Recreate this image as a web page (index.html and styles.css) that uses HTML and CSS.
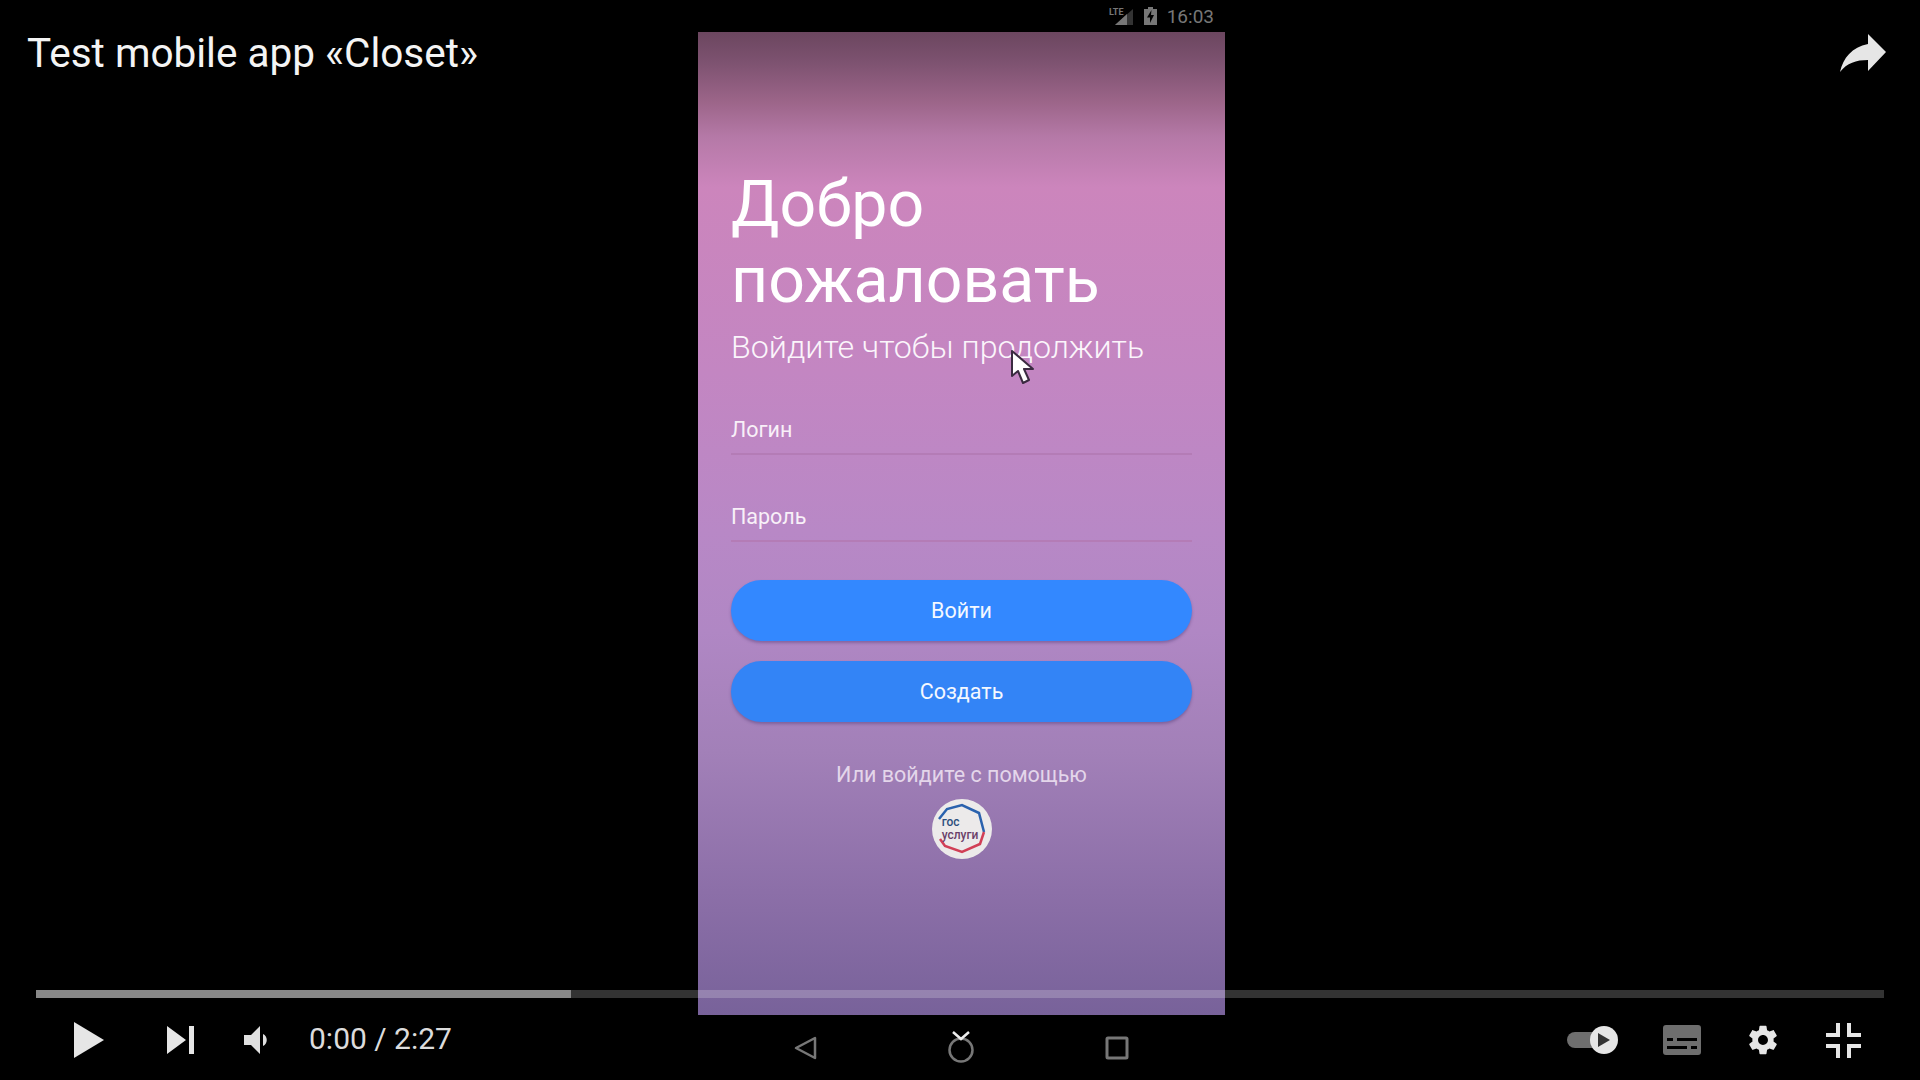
FILE: index.html
```html
<!DOCTYPE html>
<html lang="ru">
  <head>
    <meta charset="UTF-8" />
    <title>Test mobile app «Closet»</title>
    <link rel="stylesheet" href="styles.css">
  </head>
  <body>
    <div class="player">
      <div class="phone">
        <div class="status-bar">
          <svg class="signal" width="24" height="18" viewBox="0 0 24 18">
            <path d="M24 2V18H6z" fill="#333" />
            <path d="M18 7V18H6z" fill="#777" />
            <text x="0" y="8" class="lte">LTE</text>
          </svg>
          <svg class="battery" width="13" height="18" viewBox="0 0 13 18">
            <path d="M4 0h5v2h4v16H0V2h4z" fill="#777" />
            <path d="M7.500 3 3 10.500h3V16l4-8H7z" fill="#000" />
          </svg>
          <span class="clock">16:03</span>
        </div>

        <div class="screen">
          <h1>Добро<br />пожаловать</h1>
          <p class="subtitle">Войдите чтобы продолжить</p>
          <div class="field">Логин</div>
          <div class="field">Пароль</div>
          <button class="btn btn-first">Войти</button>
          <button class="btn btn-second">Создать</button>
          <p class="alt-login">Или войдите с помощью</p>
          <div class="gos-logo">
            <svg width="60" height="60" viewBox="0 0 60 60" class="gos-hex">
              <path d="M7 20 15 10 30 6 47 14 52 33" fill="none" stroke="#2a62ae" stroke-width="2.500" />
              <path d="M52 33 48 45 30 53 13 47 8 40" fill="none" stroke="#d13f56" stroke-width="2.500" />
            </svg>
            <span class="gos-text">гос<br /><span class="gos-text-red">услуги</span></span>
          </div>
        </div>

        <div class="nav-bar">
          <svg width="24" height="26" viewBox="0 0 24 26">
            <path d="M22 3V23L3 13z" fill="none" stroke="#777" stroke-width="2.500" stroke-linejoin="round" />
          </svg>
          <svg width="28" height="34" viewBox="0 0 28 34" class="home">
            <circle cx="14" cy="20" r="11.500" fill="none" stroke="#777" stroke-width="2.500" />
            <path d="M6 2l8 7 8-7" fill="none" stroke="#eee" stroke-width="2.500" />
          </svg>
          <svg width="24" height="24" viewBox="0 0 24 24" class="recent">
            <rect x="2" y="2" width="20" height="20" rx="1" fill="none" stroke="#777" stroke-width="3" />
          </svg>
        </div>
      </div>

      <svg class="cursor" width="26" height="36" viewBox="0 0 26 36">
        <path d="M2 1V26L8 21 13 33 19 30 14 19H23z" fill="#fff" stroke="#3a2a40" stroke-width="2" stroke-linejoin="round" />
      </svg>

      <div class="title-bar">
        <span class="video-title">Test mobile app «Closet»</span>
        <svg class="share" width="46" height="38" viewBox="0 0 46 38">
          <path d="M28 0 46 18 28 37V26C16 26 7 29 0 38 3 24 12 13 28 10z" fill="#e6e6e6" />
        </svg>
      </div>

      <div class="controls">
        <div class="progress"><div class="played" style="width: 535px"></div></div>
        <div class="buttons">
          <svg class="ic-play" width="30" height="36" viewBox="0 0 30 36"><path d="M0 0 30 18 0 36z" fill="#e6e6e6" /></svg>
          <svg class="ic-next" width="27" height="28" viewBox="0 0 27 28"><path d="M0 0 19 14 0 28zM22 0h5v28h-5z" fill="#e6e6e6" /></svg>
          <svg class="ic-volume" width="24" height="28" viewBox="0 0 24 28"><path d="M0 9H7L16 0V28L7 19H0zM19 8C24 10 24 18 19 20z" fill="#e0e0e0" /></svg>
          <span class="time">0:00 / 2:27</span>
          <span class="spacer"></span>
          <div class="autoplay">
            <span class="autoplay-track"></span>
            <span class="autoplay-knob">
              <svg width="14" height="16" viewBox="0 0 14 16"><path d="M1 1 13 8 1 15z" fill="#333" /></svg>
            </span>
          </div>
          <svg class="ic-captions" width="38" height="30" viewBox="0 0 38 30">
            <path fill-rule="evenodd" d="M3 0H35a3 3 0 0 1 3 3V27a3 3 0 0 1-3 3H3a3 3 0 0 1-3-3V3a3 3 0 0 1 3-3zM4 13v3H10V13zM14 13v3H34V13zM4 21v3H24V21zM28 21v3H34V21z" fill="#6e6e6e" />
          </svg>
          <svg class="ic-gear" width="34" height="34" viewBox="0 0 24 24">
            <path fill-rule="evenodd" d="M19.430 12.980c.04-.32.07-.64.07-.98s-.03-.66-.07-.98l2.110-1.650c.19-.15.24-.42.12-.64l-2-3.460c-.12-.22-.39-.3-.61-.22l-2.490 1c-.52-.4-1.080-.73-1.690-.98l-.38-2.650C14.460 2.180 14.250 2 14 2h-4c-.25 0-.46.180-.49.420l-.38 2.650c-.61.25-1.170.59-1.690.98l-2.490-1c-.23-.09-.49 0-.61.220l-2 3.460c-.13.220-.07.490.12.640l2.110 1.650c-.04.32-.07.650-.07.980s.03.660.07.980l-2.110 1.650c-.19.150-.24.420-.12.640l2 3.460c.12.220.39.300.61.220l2.490-1c.52.400 1.080.730 1.690.980l.38 2.650c.03.240.24.420.49.420h4c.25 0 .46-.180.49-.420l.38-2.650c.61-.250 1.170-.590 1.690-.980l2.490 1c.23.090.49 0 .61-.220l2-3.460c.12-.220.07-.490-.12-.640l-2.110-1.650zM12 15.500c-1.930 0-3.500-1.570-3.500-3.500s1.570-3.500 3.500-3.500 3.500 1.570 3.500 3.500-1.570 3.500-3.500 3.500z" fill="#e6e6e6" />
          </svg>
          <svg class="ic-fullscreen" width="35" height="35" viewBox="0 0 35 35">
            <path d="M10 0h4V14H0V10H10zM21 0h4V10h10v4H21zM0 21H14V35H10V25H0zM21 21H35v4H25v10H21z" fill="#e6e6e6" />
          </svg>
        </div>
      </div>
    </div>
  </body>
</html>
```

FILE: styles.css
```css
* {
  box-sizing: border-box;
}
body {
  margin: 0;
  background: #000;
  font-family: Roboto, sans-serif;
}
.player {
  position: relative;
  width: 1920px;
  height: 1080px;
  overflow: hidden;
  background: #000;
}

/* phone recording in the middle */
.phone {
  width: 527px;
  height: 1080px;
  margin-left: 698px;
  display: flex;
  flex-direction: column;
}
.status-bar {
  height: 32px;
  display: flex;
  align-items: center;
  justify-content: flex-end;
  padding-right: 11px;
}
.signal {
  margin-right: 11px;
}
.lte {
  font-size: 9px;
  font-weight: 700;
  fill: #777;
}
.battery {
  margin-right: 10px;
}
.clock {
  font-size: 19px;
  color: #777;
}
.screen {
  height: 983px;
  padding: 134px 33px 0 33px;
  color: #fff;
  background: linear-gradient(
    180deg,
    #6b465f 0,
    #7d5270 30px,
    #9c6589 70px,
    #b579a7 105px,
    #cc85bc 155px,
    #c386c2 340px,
    #b888c6 500px,
    #b087c4 600px,
    #a280b8 720px,
    #8c6fa8 860px,
    #78629a 983px
  );
}
h1 {
  margin: 0;
  font-size: 64.4px;
  font-weight: 400;
  line-height: 76px;
}
.subtitle {
  margin: 7px 0 0;
  font-size: 32.2px;
  font-weight: 300;
  line-height: 44px;
  color: #fbf5fb;
}
.field {
  height: 47px;
  margin-top: 39px;
  padding-top: 7px;
  font-size: 21.5px;
  line-height: 30px;
  border-bottom: 2px solid #b47cb6;
  color: #f8f0f8;
}
.field + .field {
  margin-top: 40px;
}
.btn {
  display: block;
  width: 100%;
  height: 61px;
  margin-top: 20px;
  border: none;
  border-radius: 31px;
  background: #3388ff;
  color: #f4f8ff;
  font-family: Roboto, sans-serif;
  font-size: 21.5px;
  box-shadow: 0 2px 3px rgba(70, 50, 110, 0.4);
}
.btn-first {
  margin-top: 38px;
}
.btn-second {
  background: #3384f6;
}
.alt-login {
  margin: 41px 0 0;
  text-align: center;
  font-size: 21.5px;
  line-height: 24px;
  color: #e4d6ea;
}
.gos-logo {
  position: relative;
  width: 60px;
  height: 60px;
  margin: 12px auto 0;
  border-radius: 50%;
  background: #eceaea;
  display: flex;
  align-items: center;
  justify-content: center;
}
.gos-hex {
  position: absolute;
  left: 0;
  top: 0;
}
.gos-text {
  position: relative;
  margin-right: 3px;
  font-size: 12px;
  font-weight: 500;
  line-height: 13px;
  color: #2c4f7d;
}
.gos-text-red {
  color: #6a3f68;
}
.nav-bar {
  flex: 1;
  display: flex;
  align-items: flex-start;
  padding: 20px 0 0 95px;
  gap: 130px;
}
.nav-bar .home {
  margin-top: -5px;
}
.nav-bar .recent {
  margin-top: 1px;
}

.cursor {
  position: absolute;
  left: 1010px;
  top: 350px;
}

/* overlays of the video player */
.title-bar {
  position: absolute;
  top: 31px;
  left: 27px;
  right: 34px;
  display: flex;
  justify-content: space-between;
  align-items: center;
}
.video-title {
  font-size: 40.5px;
  line-height: 44px;
  color: #f4f4f4;
}
.controls {
  position: absolute;
  left: 36px;
  right: 36px;
  top: 990px;
}
.progress {
  height: 8px;
  background: rgba(255, 255, 255, 0.2);
}
.played {
  height: 8px;
  background: #888;
}
.buttons {
  display: flex;
  align-items: center;
  height: 36px;
  margin-top: 24px;
  padding-left: 38px;
}
.ic-next {
  margin-left: 63px;
}
.ic-volume {
  margin-left: 50px;
}
.time {
  margin-left: 41px;
  padding-bottom: 4px;
  font-size: 30px;
  color: #dcdcdc;
}
.spacer {
  flex: 1;
}
.autoplay {
  position: relative;
  width: 51px;
  height: 28px;
  display: flex;
  align-items: center;
}
.autoplay-track {
  width: 40px;
  height: 16px;
  border-radius: 8px;
  background: #6e6e6e;
}
.autoplay-knob {
  position: absolute;
  right: 0;
  top: 0;
  width: 28px;
  height: 28px;
  border-radius: 50%;
  background: #e6e6e6;
  display: flex;
  align-items: center;
  justify-content: center;
}
.ic-captions {
  margin-left: 45px;
}
.ic-gear {
  margin-left: 45px;
}
.ic-fullscreen {
  margin-left: 46px;
  margin-right: 23px;
}
```
